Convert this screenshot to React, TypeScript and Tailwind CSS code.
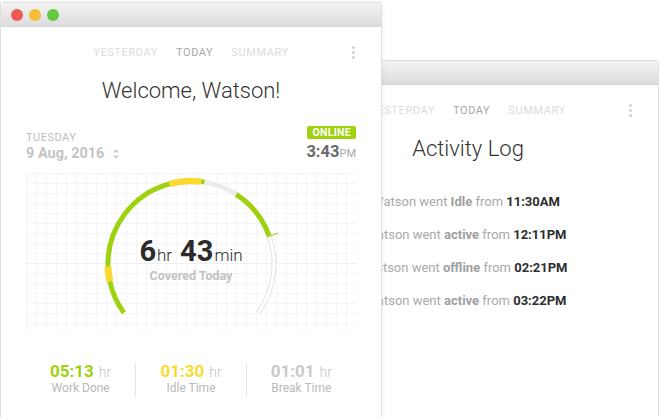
import React from 'react';

const GREEN = '#9fd20e';
const YELLOW = '#fcd931';

// point on the gauge circle, angle in degrees clockwise from top
function pt(cx: number, cy: number, r: number, deg: number) {
  const a = (deg * Math.PI) / 180;
  return [cx + r * Math.sin(a), cy - r * Math.cos(a)];
}

function arc(from: number, to: number) {
  const cx = 165;
  const cy = 91;
  const r = 83;
  const [x1, y1] = pt(cx, cy, r, from);
  const [x2, y2] = pt(cx, cy, r, to);
  const large = to - from > 180 ? 1 : 0;
  return `M ${x1} ${y1} A ${r} ${r} 0 ${large} 1 ${x2} ${y2}`;
}

function TitleBar({ lights }: { lights?: boolean }) {
  return (
    <div className="h-[24px] flex items-center gap-[6px] pl-[10px] bg-[linear-gradient(to_bottom,#f4f4f4,#dcdcdc)] border-b border-[#d6d6d6]">
      {lights && (
        <>
          <span className="w-[12px] h-[12px] rounded-full bg-[#ee5b53]" />
          <span className="w-[12px] h-[12px] rounded-full bg-[#f7bd34]" />
          <span className="w-[12px] h-[12px] rounded-full bg-[#62c840]" />
        </>
      )}
    </div>
  );
}

function Tabs() {
  return (
    <div className="relative h-[52px] flex items-center justify-center gap-[18px] text-[11px] tracking-[0.6px] pt-[1px]">
      <span className="text-[#dcdcdc]">YESTERDAY</span>
      <span className="text-[#a8a8a8]">TODAY</span>
      <span className="text-[#dcdcdc]">SUMMARY</span>
      <div className="absolute right-[26px] top-[19px] flex flex-col gap-[2px]">
        <span className="w-[3px] h-[3px] rounded-full bg-[#cfcfcf]" />
        <span className="w-[3px] h-[3px] rounded-full bg-[#cfcfcf]" />
        <span className="w-[3px] h-[3px] rounded-full bg-[#cfcfcf]" />
      </div>
    </div>
  );
}

function Gauge() {
  return (
    <div className="relative mx-[25px] mt-[10px] h-[158px] bg-[linear-gradient(to_right,#f5f5f5_1px,transparent_1px),linear-gradient(to_bottom,#f5f5f5_1px,transparent_1px)] bg-[size:10px_10px]">
      <div className="absolute left-0 right-0 top-[90px] h-px bg-[#efefef]" />
      <svg className="absolute inset-0" width="333" height="158" viewBox="0 0 333 158">
        <path d={arc(70, 126)} fill="none" stroke="#e2e2e2" strokeWidth="5" />
        <path d={arc(69.5, 126.5)} fill="none" stroke="#fff" strokeWidth="3" />
        <path d={arc(-126, -102)} fill="none" stroke={GREEN} strokeWidth="5" />
        <path d={arc(-92, -15)} fill="none" stroke={GREEN} strokeWidth="5" />
        <path d={arc(7, 9.5)} fill="none" stroke={GREEN} strokeWidth="5" />
        <path d={arc(9.5, 33)} fill="none" stroke="#ececec" strokeWidth="5" />
        <path d={arc(33, 70)} fill="none" stroke={GREEN} strokeWidth="5" />
        <path d={arc(-102, -92)} fill="none" stroke={YELLOW} strokeWidth="7" />
        <path d={arc(-15, 7)} fill="none" stroke={YELLOW} strokeWidth="6.5" />
        <line x1="241" y1="64" x2="252" y2="60" stroke={GREEN} strokeWidth="1.2" />
      </svg>
      <div className="absolute left-0 right-0 top-[63px] flex flex-col items-center">
        <div className="flex items-baseline text-[#2b2b2b] leading-[30px]">
          <span className="text-[29px] font-bold">6</span>
          <span className="text-[17px] font-light ml-[1px]">hr</span>
          <span className="text-[29px] font-bold ml-[8px]">43</span>
          <span className="text-[17px] font-light ml-[1px]">min</span>
        </div>
        <div className="text-[12.5px] font-bold text-[#c2c2c2] leading-[14px] -mt-[1px]">Covered Today</div>
      </div>
    </div>
  );
}

function Stat({ value, label, color, first }: { value: string; label: string; color: string; first?: boolean }) {
  return (
    <div className={`flex-1 h-[34px] flex flex-col items-center ${first ? '' : 'border-l border-[#e6e6e6]'}`}>
      <div className="flex items-baseline leading-[20px] -mt-[2px]">
        <span className="text-[17px] font-bold" style={{ color }}>{value}</span>
        <span className="text-[14px] font-light text-[#c4c4c4] ml-[5px]">hr</span>
      </div>
      <div className="text-[12px] text-[#b9b9b9] leading-[14px] -mt-[1px]">{label}</div>
    </div>
  );
}

function LogRow({ status, time }: { status: string; time: string }) {
  return (
    <div className="h-[33px] flex items-center justify-center text-[13px] text-[#a9a9a9]">
      <span>Watson went&nbsp;</span>
      <span className="font-bold text-[#a0a0a0]">{status}</span>
      <span>&nbsp;from&nbsp;</span>
      <span className="font-bold text-[#2e2e2e]">{time}</span>
    </div>
  );
}

export default function App() {
  return (
    <div className="relative w-[659px] h-[417px] bg-white overflow-hidden font-[Roboto,sans-serif]">
      {/* back window */}
      <div className="absolute left-[277px] top-[60px] w-[382px] h-[380px] bg-white border border-[#dedede] rounded-t-[3px]">
        <TitleBar />
        <Tabs />
        <div className="h-[22px] flex items-center justify-center text-[22px] font-light text-[#333]">Activity Log</div>
        <div className="mt-[26px] pr-[4px]">
          <LogRow status="Idle" time="11:30AM" />
          <LogRow status="active" time="12:11PM" />
          <LogRow status="offline" time="02:21PM" />
          <LogRow status="active" time="03:22PM" />
        </div>
      </div>

      {/* front window */}
      <div className="absolute left-0 top-[2px] w-[382px] h-[430px] bg-white border border-[#dedede] rounded-t-[3px] shadow-[0_0_6px_rgba(0,0,0,0.06)]">
        <TitleBar lights />
        <Tabs />
        <div className="h-[22px] flex items-center justify-center text-[22px] font-light text-[#333]">Welcome, Watson!</div>
        <div className="mt-[25px] px-[25px] flex items-end justify-between">
          <div className="flex flex-col">
            <div className="text-[11px] tracking-[0.5px] text-[#bdbdbd] leading-[14px]">TUESDAY</div>
            <div className="flex items-center leading-[18px]">
              <span className="text-[14.5px] font-bold text-[#c4c4c4]">9 Aug, 2016</span>
              <svg className="ml-[9px]" width="6" height="10" viewBox="0 0 6 10">
                <path d="M3 0 L6 3.5 H0 Z M3 10 L6 6.5 H0 Z" fill="#cfcfcf" />
              </svg>
            </div>
          </div>
          <div className="flex flex-col items-end">
            <div className="h-[13px] px-[5px] rounded-[2px] bg-[#9fd20e] text-white text-[10.5px] font-bold leading-[13px] tracking-[0.3px]">ONLINE</div>
            <div className="mt-[4px] flex items-baseline leading-[18px]">
              <span className="text-[16.5px] font-bold text-[#6a6a6a]">3:43</span>
              <span className="text-[11px] text-[#a9a9a9]">PM</span>
            </div>
          </div>
        </div>
        <Gauge />
        <div className="mt-[32px] mx-[25px] flex">
          <Stat value="05:13" label="Work Done" color={GREEN} first />
          <Stat value="01:30" label="Idle Time" color={YELLOW} />
          <Stat value="01:01" label="Break Time" color="#cacaca" />
        </div>
      </div>
    </div>
  );
}
